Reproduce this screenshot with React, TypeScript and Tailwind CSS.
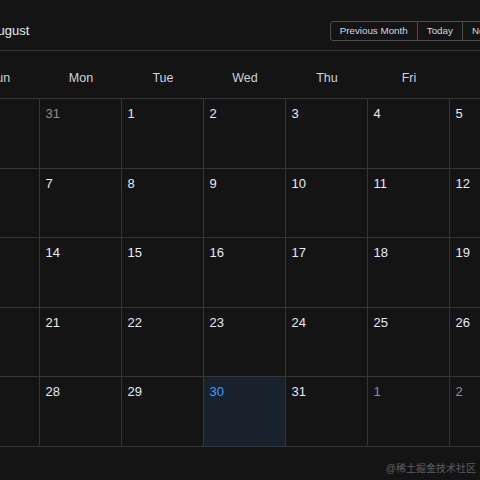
import React from "react";

type Day = { n: number; other?: boolean; today?: boolean };

const rows: { h: string; days: Day[] }[] = [
  {
    h: "h-[70px]",
    days: [{ n: 30, other: true }, { n: 31, other: true }, { n: 1 }, { n: 2 }, { n: 3 }, { n: 4 }, { n: 5 }],
  },
  { h: "h-[69px]", days: [6, 7, 8, 9, 10, 11, 12].map((n) => ({ n })) },
  { h: "h-[70px]", days: [13, 14, 15, 16, 17, 18, 19].map((n) => ({ n })) },
  { h: "h-[69px]", days: [20, 21, 22, 23, 24, 25, 26].map((n) => ({ n })) },
  {
    h: "h-[70px]",
    days: [
      { n: 27 },
      { n: 28 },
      { n: 29 },
      { n: 30, today: true },
      { n: 31 },
      { n: 1, other: true },
      { n: 2, other: true },
    ],
  },
];

const weekdays = ["Sun", "Mon", "Tue", "Wed", "Thu", "Fri", "Sat"];

export default function App() {
  return (
    <div
      className="relative w-[480px] h-[480px] overflow-hidden bg-[#141414]"
      style={{ fontFamily: '"Liberation Sans", Arial, "Noto Sans CJK SC", sans-serif' }}
    >
      <div className="-ml-[59px] w-[607px]">
        <div className="flex items-center justify-between h-[51px] pt-[11px] px-[16px] border-b border-[#363637]">
          <div className="text-[13px] text-[#E5EAF3]">2023 August</div>
          <div className="flex h-[20px] text-[9.8px] leading-none text-[#D4D7DE]">
            <div className="flex items-center px-[9px] border border-[#4C4D4F] rounded-l-[3px]">Previous Month</div>
            <div className="flex items-center px-[9px] border-y border-r border-[#4C4D4F]">Today</div>
            <div className="flex items-center px-[9px] border-y border-r border-[#4C4D4F] rounded-r-[3px]">Next Month</div>
          </div>
        </div>
        <div className="px-[16px] pt-[8px]">
          <div className="grid grid-cols-[repeat(7,82px)] pl-px h-[39px] items-center text-center text-[12.5px] text-[#CFD3DC]">
            {weekdays.map((w) => (
              <div key={w}>{w}</div>
            ))}
          </div>
          <div className="w-[575px] border-l border-t border-[#363637]">
            {rows.map((r, i) => (
              <div key={i} className="grid grid-cols-[repeat(7,82px)]">
                {r.days.map((d, j) => (
                  <div
                    key={j}
                    className={
                      r.h +
                      " border-r border-b border-[#363637] pl-[5.5px] pt-[5px] text-[13px] " +
                      (d.today
                        ? "bg-[#18222C] text-[#409EFF]"
                        : d.other
                        ? "text-[#8D9095]"
                        : "text-[#E5EAF3]")
                    }
                  >
                    {d.n}
                  </div>
                ))}
              </div>
            ))}
          </div>
        </div>
      </div>
      <div
        className="absolute right-[4px] top-[462px] text-[10px] leading-[14px] text-[#5f5f5f]"
        style={{ fontFamily: '"Liberation Sans", "Noto Sans CJK SC", sans-serif' }}
      >
        @稀土掘金技术社区
      </div>
    </div>
  );
}
